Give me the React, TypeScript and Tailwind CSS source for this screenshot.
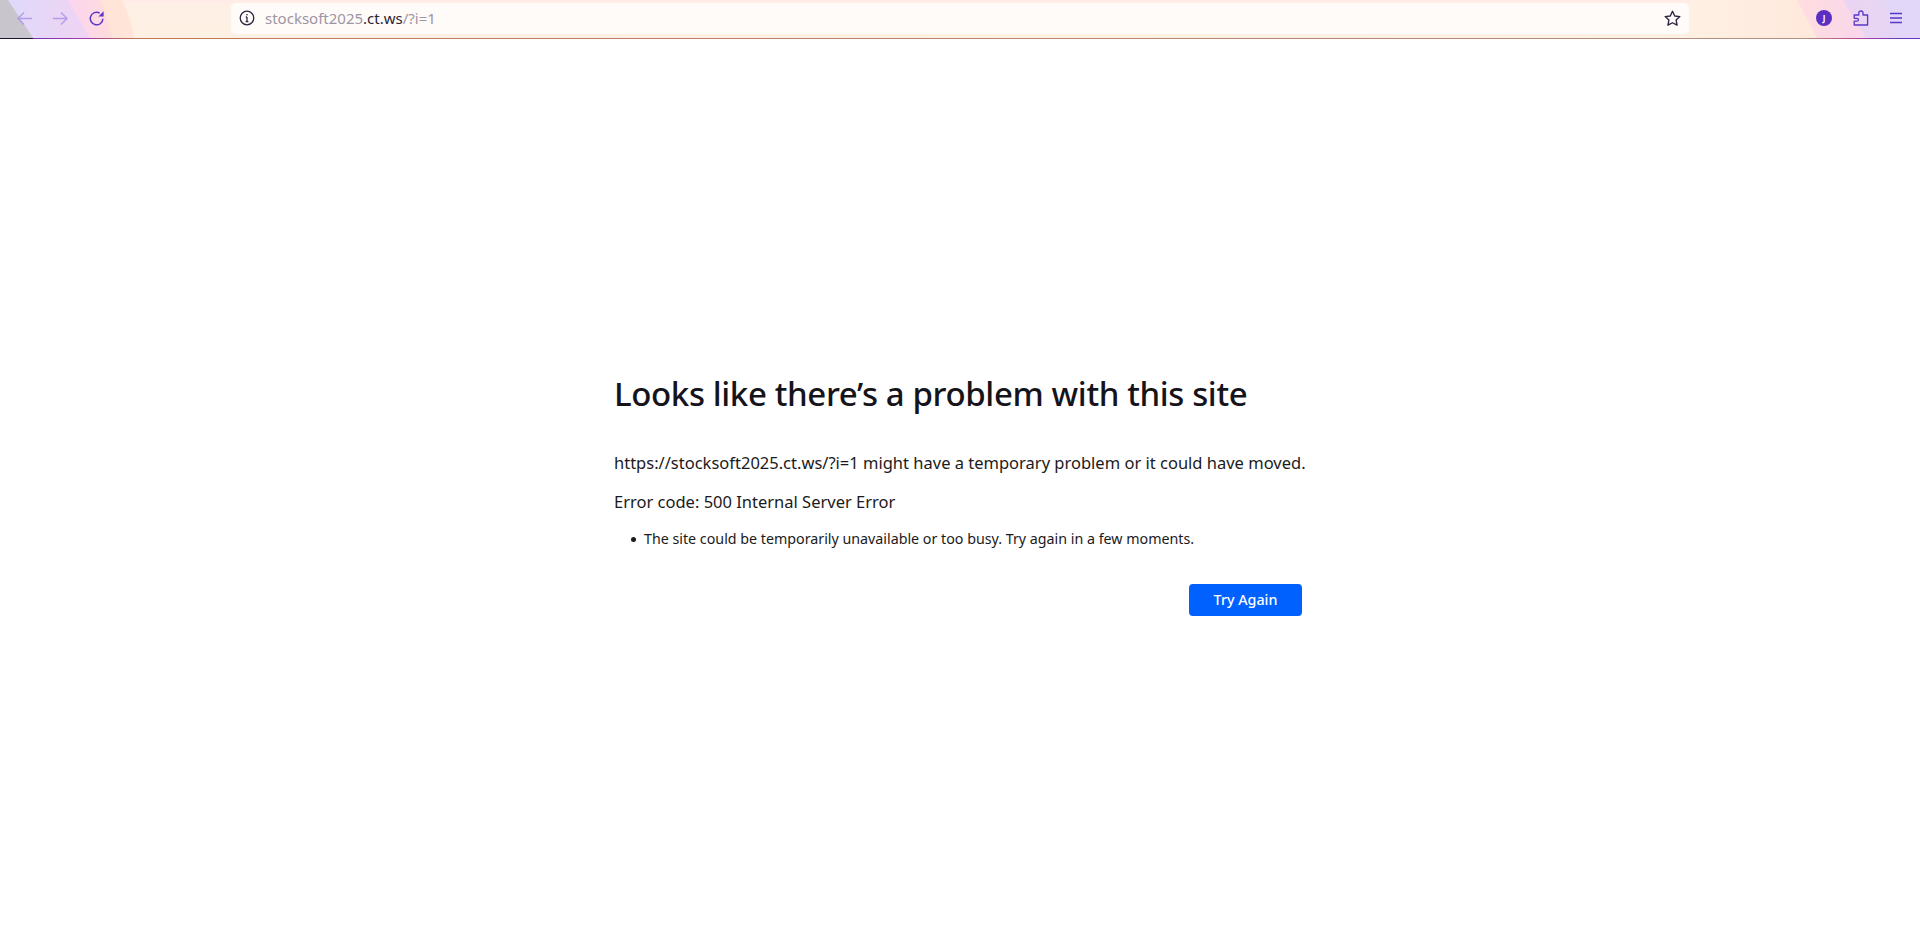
import React from "react";

function ToolbarArt() {
  return (
    <svg className="absolute inset-0 h-full w-full" viewBox="0 0 1920 39" preserveAspectRatio="none" aria-hidden="true">
      <defs>
        <linearGradient id="top" x1="0" x2="0" y1="0" y2="1">
          <stop offset="0" stopColor="#ffeae6" />
          <stop offset="0.12" stopColor="#fff0e6" />
          <stop offset="1" stopColor="#fff0e4" />
        </linearGradient>
        <linearGradient id="peachL" gradientUnits="userSpaceOnUse" x1="100" x2="240" y1="0" y2="0">
          <stop offset="0" stopColor="#ffe3d6" />
          <stop offset="1" stopColor="#fff0e4" />
        </linearGradient>
        <linearGradient id="pinkL" gradientUnits="userSpaceOnUse" x1="70" x2="112" y1="0" y2="0">
          <stop offset="0" stopColor="#fbd5f0" />
          <stop offset="1" stopColor="#ffdcdc" />
        </linearGradient>
        <linearGradient id="lavL" gradientUnits="userSpaceOnUse" x1="10" x2="90" y1="0" y2="0">
          <stop offset="0" stopColor="#e0d9f9" />
          <stop offset="1" stopColor="#f0d3f3" />
        </linearGradient>
        <linearGradient id="peachR" gradientUnits="userSpaceOnUse" x1="1690" x2="1817" y1="0" y2="0">
          <stop offset="0" stopColor="#fff0e4" />
          <stop offset="1" stopColor="#ffe8dc" />
        </linearGradient>
        <linearGradient id="pinkR" gradientUnits="userSpaceOnUse" x1="1797" x2="1880" y1="0" y2="0">
          <stop offset="0" stopColor="#ffdde0" />
          <stop offset="1" stopColor="#f8d5ec" />
        </linearGradient>
        <linearGradient id="lavR" gradientUnits="userSpaceOnUse" x1="1843" x2="1920" y1="0" y2="0">
          <stop offset="0" stopColor="#ecd4f2" />
          <stop offset="1" stopColor="#e2d6f7" />
        </linearGradient>
        <linearGradient id="line" gradientUnits="userSpaceOnUse" x1="0" x2="1920" y1="0" y2="0">
          <stop offset="0.017" stopColor="#7a32b6" />
          <stop offset="0.047" stopColor="#a03ea0" />
          <stop offset="0.07" stopColor="#c0785a" />
          <stop offset="0.94" stopColor="#b58f80" />
          <stop offset="0.965" stopColor="#b84e92" />
          <stop offset="0.99" stopColor="#6a35c0" />
        </linearGradient>
      </defs>
      <rect width="1920" height="38" fill="url(#top)" />
      <path d="M0 0H122C128 12 133 26 134 38H0Z" fill="url(#peachL)" />
      <path d="M0 0H100C105 12 110 26 112 38H0Z" fill="url(#pinkL)" />
      <path d="M0 0H68L90 38H0Z" fill="url(#lavL)" />
      <path d="M0 0H8L33 38H0Z" fill="#c8c5cd" />
      <rect x="1690" width="127" height="38" fill="url(#peachR)" />
      <path d="M1797 0 1817 38H1920V0Z" fill="url(#pinkR)" />
      <path d="M1843 0 1866 38H1920V0Z" fill="url(#lavR)" />
      <path d="M1884 0 1898 38H1920V0Z" fill="#e2d7f8" />
      <rect y="38" width="1920" height="1" fill="url(#line)" />
      <rect y="38" width="33" height="1" fill="#1c1238" />
    </svg>
  );
}

export default function App() {
  return (
    <div className="flex h-[925px] flex-col overflow-hidden bg-white font-['Noto_Sans','Open_Sans',sans-serif] text-[#1b1a20]">
      <header className="relative flex h-[39px] shrink-0 items-start">
        <ToolbarArt />
        <div className="relative flex h-[36px] w-full items-center">
          <div className="flex w-[231px] shrink-0 items-center pl-[17px]">
            <svg width="15" height="15" viewBox="0 0 15 15" fill="none" stroke="#b39cea" strokeWidth="1.4">
              <path d="M15 7.5H1M7 1.5 1 7.5 7 13.5" />
            </svg>
            <svg className="ml-[21px]" width="15" height="15" viewBox="0 0 15 15" fill="none" stroke="#b39cea" strokeWidth="1.4">
              <path d="M0 7.5H14M8 1.5 14 7.5 8 13.5" />
            </svg>
            <svg className="ml-[21px]" width="15" height="15" viewBox="0 0 15 15" fill="none" stroke="#5b37c8" strokeWidth="1.5">
              <path d="M13.9 7.8A6.3 6.3 0 1 1 10.6 2" />
              <path d="M14.6.3v5.2H9.4Z" fill="#5b37c8" stroke="none" />
            </svg>
          </div>
          <div className="flex h-[31px] w-[1458px] shrink-0 items-center rounded-[5px] bg-[#fffbf8] pl-[8px] pr-[8px]">
            <svg width="16" height="16" viewBox="0 0 16 16" fill="none" stroke="#2b2440" strokeWidth="1.3">
              <circle cx="8" cy="8" r="6.8" />
              <path d="M8 7v4.6M6.6 11.6h2.8M6.8 7H8" />
              <circle cx="8" cy="4.7" r=".8" fill="#2b2440" stroke="none" />
            </svg>
            <span className="ml-[10px] text-[15px] text-[#9d95a5]">
              stocksoft2025<span className="text-[#2a2438]">.ct.ws</span>/?i=1
            </span>
            <svg className="ml-auto" width="17" height="17" viewBox="0 0 16 16" fill="none" stroke="#2b2440" strokeWidth="1.3" strokeLinejoin="round">
              <path d="M8 1.2 10.1 5.6 14.9 6.2 11.4 9.5 12.3 14.3 8 12 3.7 14.3 4.6 9.5 1.1 6.2 5.9 5.6Z" />
            </svg>
          </div>
          <div className="ml-auto flex items-center pr-[17px]">
            <span className="flex h-4 w-4 items-center justify-center rounded-full bg-[#5a2fc2] text-[8px] font-bold text-white">J</span>
            <svg className="ml-[21px]" width="16" height="16" viewBox="0 0 16 16" fill="none" stroke="#5b37c8" strokeWidth="1.3" strokeLinejoin="round">
              <path d="M1.2 15V11.2H4.2C5 11.2 5.4 10.4 5.4 9.7 5.4 9 4.8 8.3 4 8.3H1.2V5H5.8V3C5.8 1.8 6.7 1 7.9 1 9.1 1 10 1.8 10 3V5H14.6V15Z" />
            </svg>
            <svg className="ml-[20px]" width="14" height="14" viewBox="0 0 14 14" fill="none" stroke="#5b37c8" strokeWidth="1.3">
              <path d="M1 2.5h12M1 7h12M1 11.5h12" />
            </svg>
          </div>
        </div>
      </header>
      <main className="flex flex-1 flex-col pl-[614px] pt-[333px]">
        <h1 className="text-[33px] font-medium leading-[44px] tracking-[-0.37px] text-[#15141a]">
          Looks like there’s a problem with this site
        </h1>
        <p className="mt-[36px] text-[16.5px] leading-[22px]">
          https://stocksoft2025.ct.ws/?i=1 might have a temporary problem or it could have moved.
        </p>
        <p className="mt-[17px] text-[16.5px] leading-[22px]">
          Error code: 500 Internal Server Error
        </p>
        <ul className="mt-[16px] pl-[17px] text-[14.25px] leading-[20px]">
          <li className="flex items-center gap-[8px]">
            <span className="h-[5px] w-[5px] shrink-0 rounded-full bg-[#1b1a20]" />
            <span>The site could be temporarily unavailable or too busy. Try again in a few moments.</span>
          </li>
        </ul>
        <div className="mt-[35px] flex w-[688px] justify-end">
          <button className="h-[32px] w-[113px] rounded-[4px] bg-[#0061ff] text-[14.3px] font-medium text-white">
            Try Again
          </button>
        </div>
      </main>
    </div>
  );
}
